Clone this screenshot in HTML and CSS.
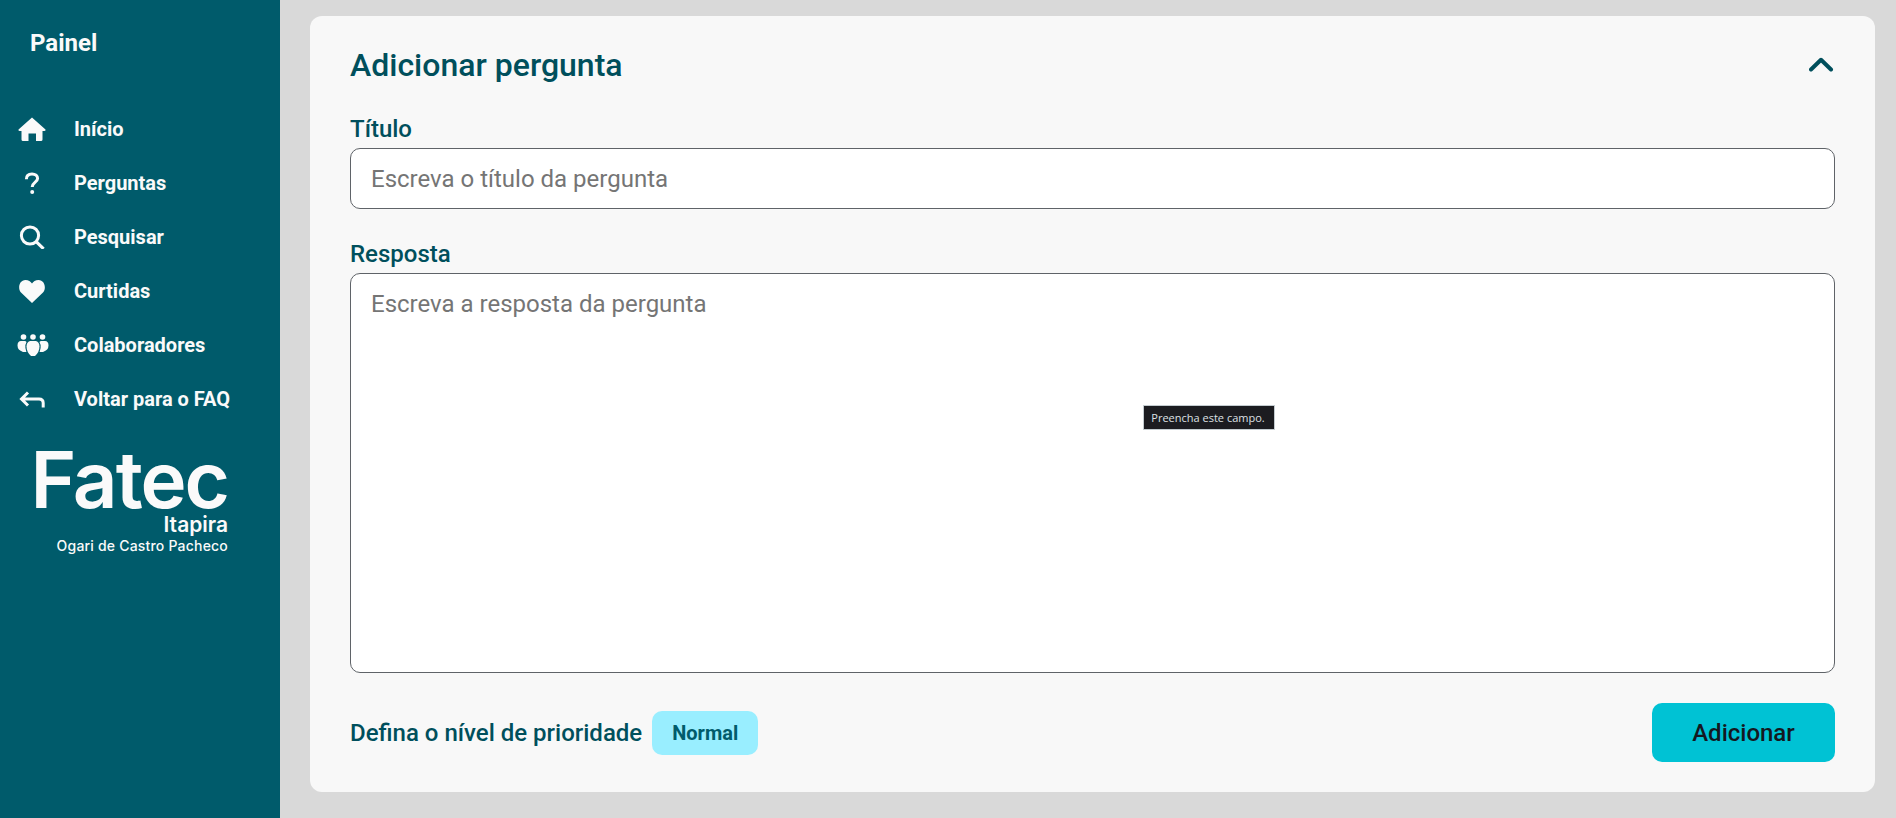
FILE: index.html
```html
<!DOCTYPE html>
<html lang="pt-BR">
<head>
    <meta charset="UTF-8">
    <meta name="viewport" content="width=device-width, initial-scale=1.0">
    <title>Adicionar pergunta - Painel</title>
    <link rel="stylesheet" href="styles.css">
</head>
<body>
    <aside class="sidebar">
        <h1 class="sidebar-title">Painel</h1>
        <nav class="nav">
            <a class="nav-item" href="#">
                <svg class="nav-icon" viewBox="0 0 28 24"><path d="M14 0.5 L27.5 12.6 Q28 14 26.5 14 L24.5 14 L24.5 22.5 Q24.5 24 23 24 L18 24 L18 16.5 L10.5 16.5 L10.5 24 L5 24 Q3.5 24 3.5 22.5 L3.5 14 L1.5 14 Q0 14 0.5 12.6 Z" fill="#fafafa"/></svg>
                <span>Início</span>
            </a>
            <a class="nav-item" href="#">
                <svg class="nav-icon" viewBox="0 0 28 24"><path d="M8.4 8.2 C8.4 4.8 10.6 3 14 3 C17.4 3 19.6 4.8 19.6 7.6 C19.6 11 14.2 11.4 14.2 16" fill="none" stroke="#fafafa" stroke-width="3"/><circle cx="14.2" cy="21" r="2" fill="#fafafa"/></svg>
                <span>Perguntas</span>
            </a>
            <a class="nav-item" href="#">
                <svg class="nav-icon" viewBox="0 0 28 24"><circle cx="12" cy="10.5" r="8.6" fill="none" stroke="#fafafa" stroke-width="3"/><path d="M18.4 16.8 L25.6 23.8" stroke="#fafafa" stroke-width="3.2"/></svg>
                <span>Pesquisar</span>
            </a>
            <a class="nav-item" href="#">
                <svg class="nav-icon" viewBox="0 0 28 24"><path d="M14 24 L3 13.5 C-0.5 10 1 1 7.5 1 C10.5 1 12.8 2.6 14 4.6 C15.2 2.6 17.5 1 20.5 1 C27 1 28.5 10 25 13.5 Z" fill="#fafafa"/></svg>
                <span>Curtidas</span>
            </a>
            <a class="nav-item" href="#">
                <svg class="nav-icon nav-icon-wide" viewBox="0 0 32 22"><g fill="#fafafa"><circle cx="6.5" cy="3" r="2.8"/><circle cx="16" cy="3" r="2.8"/><circle cx="25.5" cy="3" r="2.8"/><path d="M4 7 L8 7 Q9.6 7 9.4 8.6 Q7.8 11 8.4 14 L9.4 18 L6 18 Q0.5 16 0.5 11.5 Q0.5 7 4 7 Z"/><path d="M24 7 L28 7 Q31.5 7 31.5 11.5 Q31.5 16 26 18 L22.6 18 L23.6 14 Q24.2 11 22.6 8.6 Q22.4 7 24 7 Z"/><path d="M13 7 L19 7 Q22.5 8 22.5 12.5 Q22.5 18 18 22 L14 22 Q9.5 18 9.5 12.5 Q9.5 8 13 7 Z"/></g></svg>
                <span>Colaboradores</span>
            </a>
            <a class="nav-item" href="#">
                <svg class="nav-icon" viewBox="0 0 28 24"><path d="M10 5.5 L3.5 12 L10 18.5 M3.5 12 L21 12 Q25.2 12 25.2 16 L25.2 20.5" fill="none" stroke="#fafafa" stroke-width="3"/></svg>
                <span>Voltar para o FAQ</span>
            </a>
        </nav>
        <div class="logo">
            <span class="logo-name">Fatec</span>
            <span class="logo-city">Itapira</span>
            <span class="logo-school">Ogari de Castro Pacheco</span>
        </div>
    </aside>

    <main class="content">
        <form class="card">
            <div class="card-header">
                <h2>Adicionar pergunta</h2>
                <svg class="chevron" viewBox="0 0 26 16"><path d="M2 12.5 L12 2.8 L22 12.5" fill="none" stroke="#004f5c" stroke-width="4" stroke-linecap="round" stroke-linejoin="round"/></svg>
            </div>
            <div class="form-group">
                <label for="titulo">Título</label>
                <input type="text" id="titulo" placeholder="Escreva o título da pergunta">
            </div>
            <div class="form-group form-group-grow">
                <label for="resposta">Resposta</label>
                <textarea id="resposta" placeholder="Escreva a resposta da pergunta"></textarea>
                <div class="tooltip">Preencha este campo.</div>
            </div>
            <div class="card-footer">
                <div class="priority">
                    <span>Defina o nível de prioridade</span>
                    <button type="button" class="badge">Normal</button>
                </div>
                <button type="submit" class="submit">Adicionar</button>
            </div>
        </form>
    </main>
</body>
</html>
```

FILE: styles.css
```css
* {
    box-sizing: border-box;
}
html, body {
    height: 100%;
}
body {
    margin: 0;
    display: flex;
    overflow: hidden;
    font-family: Roboto, "Liberation Sans", sans-serif;
    background-color: #d9d9d9;
    color: #004f5c;
}
.sidebar {
    width: 280px;
    flex-shrink: 0;
    background-color: #005b6b;
    color: #fafafa;
    padding: 30px 0 0 18px;
}
.sidebar-title {
    margin: 0 0 45px 12px;
    font-size: 24px;
    line-height: 27px;
    font-weight: 700;
}
.nav {
    display: flex;
    flex-direction: column;
}
.nav-item {
    display: flex;
    align-items: center;
    height: 54px;
    color: #fafafa;
    text-decoration: none;
    font-size: 20px;
    font-weight: 700;
}
.nav-icon {
    width: 28px;
    height: 24px;
    margin-right: 28px;
    flex-shrink: 0;
}
.nav-icon-wide {
    width: 32px;
    height: 22px;
    margin-left: -1px;
    margin-right: 25px;
}
.logo {
    width: 210px;
    margin-top: 21px;
    display: flex;
    flex-direction: column;
    align-items: flex-end;
    color: #fafafa;
    font-family: Inter, Roboto, sans-serif;
}
.logo-name {
    font-size: 78px;
    line-height: 66px;
    font-weight: 600;
    letter-spacing: -2px;
}
.logo-city {
    font-size: 21px;
    line-height: 24px;
    font-weight: 600;
}
.logo-school {
    font-size: 14px;
    line-height: 18px;
    font-weight: 500;
    letter-spacing: 0.2px;
}
.content {
    flex: 1;
    padding: 16px 21px 26px 30px;
    display: flex;
}
.card {
    flex: 1;
    display: flex;
    flex-direction: column;
    background-color: #f8f8f8;
    border-radius: 12px;
    padding: 28px 40px 30px;
}
.card-header {
    display: flex;
    justify-content: space-between;
    align-items: center;
    height: 42px;
    margin-bottom: 29px;
}
.card-header h2 {
    margin: 0;
    font-size: 32px;
    font-weight: 500;
}
.chevron {
    width: 26px;
    height: 16px;
}
.form-group {
    display: flex;
    flex-direction: column;
    margin-bottom: 31px;
}
.form-group-grow {
    position: relative;
    flex: 1;
    margin-bottom: 30px;
}
label {
    font-size: 24px;
    line-height: 28px;
    font-weight: 500;
    margin-bottom: 5px;
}
input, textarea {
    width: 100%;
    border: 1px solid #5f6368;
    border-radius: 10px;
    background: #fff;
    padding: 0 20px;
    font-family: inherit;
    font-size: 24px;
    color: #333;
    outline: none;
}
input {
    height: 61px;
}
textarea {
    flex: 1;
    resize: none;
    padding-top: 16px;
}
input::placeholder, textarea::placeholder {
    color: #757575;
    opacity: 1;
}
.tooltip {
    position: absolute;
    left: 793px;
    top: 165px;
    width: 132px;
    height: 25px;
    display: flex;
    align-items: center;
    justify-content: center;
    padding-right: 2px;
    background-color: #1c1c20;
    border: 1px solid #c4ccd0;
    color: #dde0e4;
    font-family: "Open Sans", sans-serif;
    font-size: 11px;
}
.card-footer {
    display: flex;
    justify-content: space-between;
    align-items: center;
}
.priority {
    display: flex;
    align-items: center;
    gap: 10px;
    font-size: 24px;
    font-weight: 500;
}
.badge {
    width: 106px;
    height: 44px;
    border: none;
    border-radius: 10px;
    background-color: #99eeff;
    color: #005b6b;
    font-family: inherit;
    font-size: 20px;
    font-weight: 700;
}
.submit {
    width: 183px;
    height: 59px;
    border: none;
    border-radius: 10px;
    background-color: #00c2d4;
    color: #14181f;
    font-family: inherit;
    font-size: 24px;
    font-weight: 500;
}
```
